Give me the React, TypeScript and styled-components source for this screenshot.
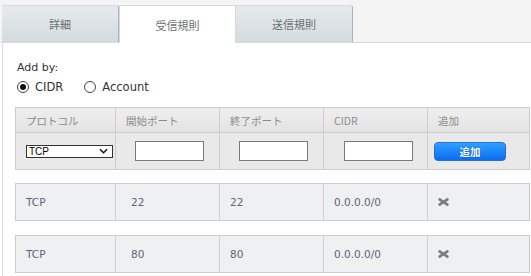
import styled, { createGlobalStyle, css } from "styled-components";

const GlobalStyle = createGlobalStyle`
  html, body {
    margin: 0;
    padding: 0;
    background: #ffffff;
    overflow: hidden;
  }
  body {
    font-family: "DejaVu Sans", Verdana, "Noto Sans CJK JP", sans-serif;
    font-size: 11px;
  }
`;

const tabs = ["詳細", "受信規則", "送信規則"];
const activeTab = 1;

const rules = [
  { protocol: "TCP", from: "22", to: "22", cidr: "0.0.0.0/0" },
  { protocol: "TCP", from: "80", to: "80", cidr: "0.0.0.0/0" },
];

const columns = [100, 104, 104, 104, 102];

export default function App() {
  return (
    <Page>
      <GlobalStyle />
      <TabBar>
        {tabs.map((t, i) => (
          <Tab key={t} $active={i === activeTab}>
            {t}
          </Tab>
        ))}
      </TabBar>
      <Panel>
        <AddByLabel>Add by:</AddByLabel>
        <RadioRow>
          <RadioLabel>
            <Radio $checked />
            CIDR
          </RadioLabel>
          <RadioLabel>
            <Radio />
            Account
          </RadioLabel>
        </RadioRow>

        <RuleTable>
          <ColGroup />
          <thead>
            <tr>
              <HeadCell>プロトコル</HeadCell>
              <HeadCell>開始ポート</HeadCell>
              <HeadCell>終了ポート</HeadCell>
              <HeadCell>CIDR</HeadCell>
              <HeadCell>追加</HeadCell>
            </tr>
          </thead>
          <tbody>
            <tr>
              <InputCell>
                <SelectWrap>
                  <Select defaultValue="TCP">
                    <option>TCP</option>
                    <option>UDP</option>
                    <option>ICMP</option>
                  </Select>
                  <Chevron viewBox="0 0 10 6">
                    <path d="M1 1 L5 5 L9 1" fill="none" stroke="#111" strokeWidth="1.6" />
                  </Chevron>
                </SelectWrap>
              </InputCell>
              <InputCell $pad={19}>
                <TextInput />
              </InputCell>
              <InputCell $pad={19}>
                <TextInput />
              </InputCell>
              <InputCell $pad={20}>
                <TextInput />
              </InputCell>
              <InputCell $pad={6}>
                <AddButton>追加</AddButton>
              </InputCell>
            </tr>
          </tbody>
        </RuleTable>

        {rules.map((r) => (
          <DataTable key={r.from}>
            <ColGroup />
            <tbody>
              <tr>
                <DataCell>{r.protocol}</DataCell>
                <DataCell $indent={15}>{r.from}</DataCell>
                <DataCell>{r.to}</DataCell>
                <DataCell>{r.cidr}</DataCell>
                <DataCell>
                  <RemoveIcon viewBox="0 0 11 8">
                    <path
                      d="M1.6 1.4 L9.4 6.6 M9.4 1.4 L1.6 6.6"
                      stroke="#7b7b7b"
                      strokeWidth="2.6"
                      strokeLinecap="round"
                    />
                  </RemoveIcon>
                </DataCell>
              </tr>
            </tbody>
          </DataTable>
        ))}
      </Panel>
    </Page>
  );
}

const ColGroup = () => (
  <colgroup>
    {columns.map((w, i) => (
      <col key={i} style={{ width: w }} />
    ))}
  </colgroup>
);

const Page = styled.div`
  width: 600px;
  min-height: 276px;
`;

const TabBar = styled.div`
  display: flex;
  padding: 5px 0 0 2px;
  background: #f4f4f4;
  border-bottom: 1px solid #d9d9d9;
`;

const Tab = styled.div<{ $active?: boolean }>`
  box-sizing: border-box;
  width: 117px;
  height: 37px;
  display: flex;
  align-items: center;
  justify-content: center;
  font-family: "Noto Sans CJK JP", sans-serif;
  font-size: 11px;
  color: #6a6f73;
  background: linear-gradient(#e6eaec, #d4dbde);
  border-top: 1px solid #d6dadc;
  border-right: 1px solid #9fb6c9;
  border-top-right-radius: 3px;

  ${({ $active }) =>
    $active &&
    css`
      background: #ffffff;
      border: 1px solid #d9d9d9;
      border-bottom: none;
      height: 38px;
      margin-bottom: -1px;
      border-radius: 0;
    `}
`;

const Panel = styled.div`
  margin-left: 2px;
  border-left: 1px solid #dcdcdc;
  padding: 17px 0 10px 12px;
  background: #ffffff;
`;

const AddByLabel = styled.div`
  padding-left: 2px;
  line-height: 16px;
  color: #333;
`;

const RadioRow = styled.div`
  display: flex;
  gap: 21px;
  margin-top: 3px;
  padding-left: 2px;
  line-height: 16px;
  color: #333;
`;

const RadioLabel = styled.label`
  display: flex;
  align-items: center;
  gap: 6px;
  font-size: 11.5px;
`;

const Radio = styled.span<{ $checked?: boolean }>`
  box-sizing: border-box;
  width: 12px;
  height: 12px;
  border-radius: 50%;
  border: 1px solid #444;
  background: #fff;
  display: flex;
  align-items: center;
  justify-content: center;

  &::after {
    content: "";
    width: 6px;
    height: 6px;
    border-radius: 50%;
    background: ${({ $checked }) => ($checked ? "#111" : "transparent")};
  }
`;

const tableBase = css`
  border-collapse: collapse;
  table-layout: fixed;
  width: 514px;
  td,
  th {
    border: 1px solid #cdcdcd;
    padding: 0 0 0 10px;
    text-align: left;
    box-sizing: border-box;
  }
`;

const RuleTable = styled.table`
  ${tableBase}
  margin-top: 12px;
`;

const HeadCell = styled.th`
  height: 25px;
  font-family: "Noto Sans CJK JP", sans-serif;
  font-weight: normal;
  font-size: 10.5px;
  color: #8c8c8c;
  background: linear-gradient(#efefef, #e3e3e3);
`;

const InputCell = styled.td<{ $pad?: number }>`
  height: 37px;
  background: #e9e9e9;
  padding-left: ${({ $pad }) => $pad ?? 10}px !important;
`;

const SelectWrap = styled.div`
  position: relative;
  width: 87px;
  height: 13px;
`;

const Select = styled.select`
  appearance: none;
  box-sizing: border-box;
  width: 87px;
  height: 13px;
  margin: 0;
  padding: 0 0 0 2px;
  border: 1px solid #333;
  border-radius: 0;
  background: #fff;
  font-family: "Liberation Sans", Arial, sans-serif;
  font-size: 10px;
  line-height: 11px;
  color: #000;
`;

const Chevron = styled.svg`
  position: absolute;
  right: 5px;
  top: 3px;
  width: 9px;
  height: 6px;
  pointer-events: none;
`;

const TextInput = styled.input`
  display: block;
  box-sizing: border-box;
  width: 69px;
  height: 20px;
  margin: 0;
  border: 1px solid #7a7a7a;
  background: #fff;
  padding: 0 3px;
`;

const AddButton = styled.button`
  display: block;
  box-sizing: border-box;
  width: 72px;
  height: 19px;
  border: 1px solid #2a6fd0;
  border-radius: 4px;
  background: linear-gradient(#2fa0ff, #0a6cf2);
  color: #fff;
  font-family: "Noto Sans CJK JP", sans-serif;
  font-weight: bold;
  font-size: 10.5px;
  padding: 0;
  text-shadow: 0 0 1px #0040a0;
`;

const DataTable = styled.table`
  ${tableBase}
  margin-top: 13px;
  & + & {
    margin-top: 14px;
  }
`;

const DataCell = styled.td<{ $indent?: number }>`
  height: 37px;
  background: #eff0f2;
  color: #5b6577;
  font-size: 10.5px;
  padding-left: ${({ $indent }) => $indent ?? 10}px !important;
`;

const RemoveIcon = styled.svg`
  display: block;
  width: 11px;
  height: 8px;
`;
